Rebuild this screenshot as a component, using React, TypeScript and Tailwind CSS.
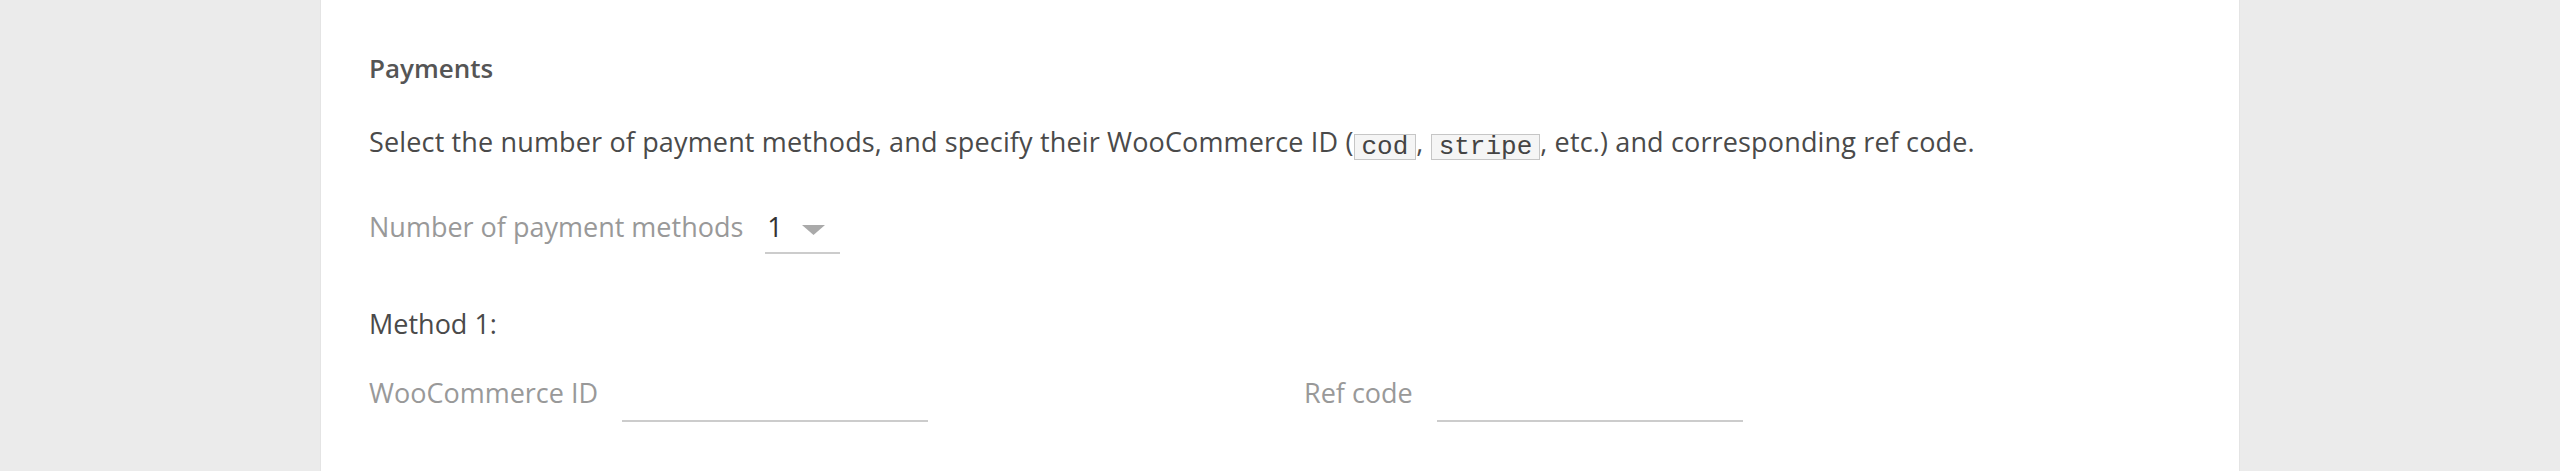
import React from 'react';

const font = { fontFamily: '"Open Sans", "Noto Sans", sans-serif' };

const Code: React.FC<{ children: React.ReactNode }> = ({ children }) => (
    <code className="inline-block border border-[#c6c6c6] bg-[#f5f5f5] px-[7px] text-[26px] leading-[24px] tracking-normal text-[#444] font-['Liberation_Mono',monospace] align-[-2px]">
        {children}
    </code>
);

const Field: React.FC<{ label: string }> = ({ label }) => (
    <div className="flex items-start">
        <span className="text-[27px] leading-[40px] text-[#999]">{label}</span>
        <div className="ml-6 w-[306px] h-[49px] border-b-2 border-[#cccccc]" />
    </div>
);

export default function App() {
    return (
        <div className="min-h-[471px] bg-[#ebebeb]" style={font}>
            <div className="mx-auto w-[1920px] min-h-[471px] bg-white border-x border-[#e4e4e4] px-12 pt-[52px]">
                <h2 className="text-[26px] leading-[32px] font-semibold text-[#555]">Payments</h2>

                <p className="mt-[38px] text-[27px] leading-[40px] tracking-[0.15px] text-[#4a4a4a]">
                    Select the number of payment methods, and specify their WooCommerce ID (<Code>cod</Code>, <Code>stripe</Code>, etc.) and corresponding ref code.
                </p>

                <div className="mt-[45px] flex items-start">
                    <span className="text-[27px] leading-[40px] text-[#999]">Number of payment methods</span>
                    <div className="ml-[22px] w-[75px]">
                        <div className="h-[47px] flex items-start justify-between border-b-2 border-[#cccccc]">
                            <span className="text-[27px] leading-[40px] text-[#333] pl-[2px]">1</span>
                            <svg width="23" height="10" viewBox="0 0 23 10" className="mt-[18px] mr-[15px]">
                                <path d="M0 0 L23 0 L11.5 10 Z" fill="#aaaaaa" />
                            </svg>
                        </div>
                    </div>
                </div>

                <div className="mt-[50px] text-[27px] leading-[40px] text-[#4a4a4a]">Method 1:</div>

                <div className="mt-[29px] grid grid-cols-2 gap-12">
                    <Field label="WooCommerce ID" />
                    <Field label="Ref code" />
                </div>
            </div>
        </div>
    );
}
